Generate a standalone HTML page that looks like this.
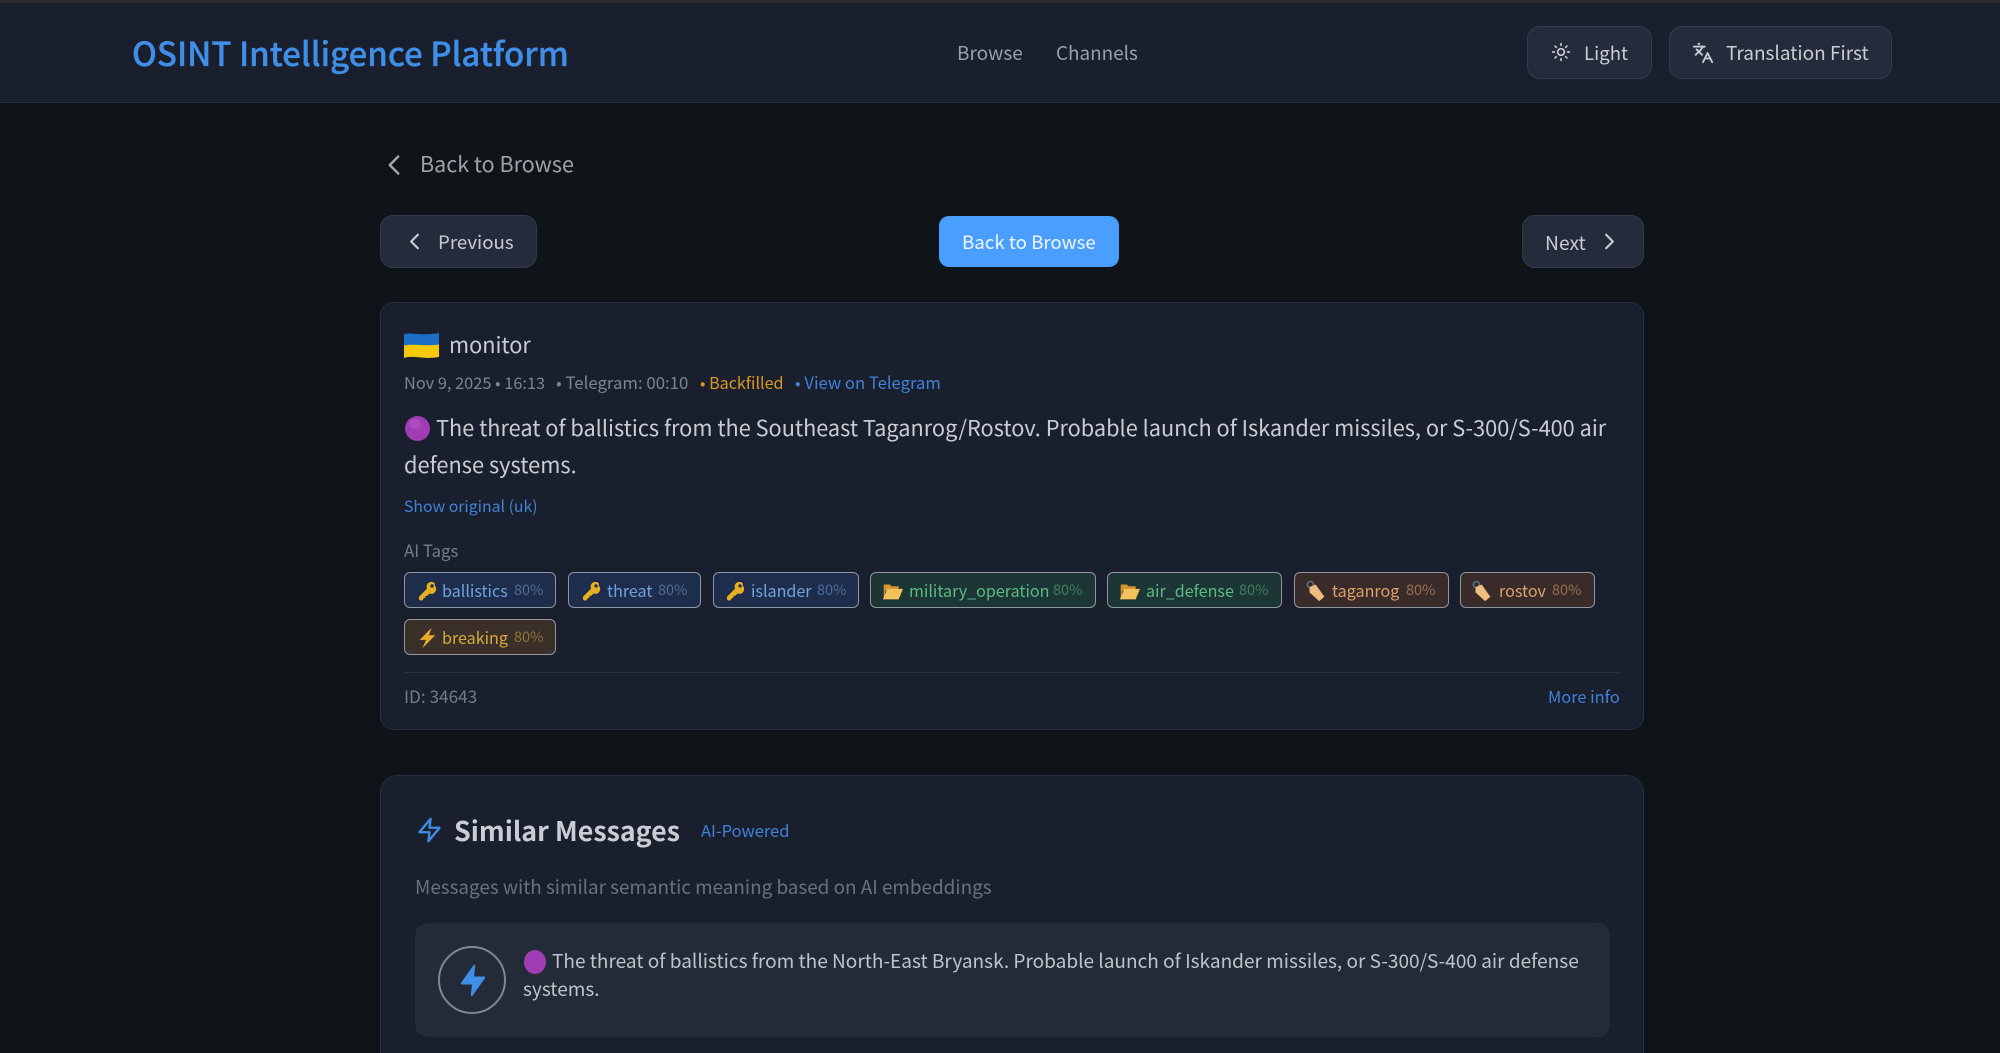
<!DOCTYPE html>
<html lang="en"><head><meta charset="utf-8"><title>OSINT Intelligence Platform</title>
<style>
html,body{margin:0;padding:0;width:2000px;height:1053px;overflow:hidden;background:#0f1419}
body{position:relative;font-family:"Noto Sans CJK JP","Liberation Sans",sans-serif;color:#c9ccd2}
.t{position:absolute;white-space:nowrap;line-height:40px;height:40px}
.b{position:absolute;box-sizing:border-box}
.btn{background:#252b3a;border:1.5px solid #333a49;border-radius:13px}
.card{background:#1a1f2e;border:1.5px solid #282f3e;border-radius:14px}
.tag{height:36px;border:1.5px solid #8f96a0;border-radius:6px;top:572px}
.r2{top:619px}
.bl{background:#1e2d4b}.gr{background:#1c3535}.br{background:#3a2b2b}.ye{background:#3a3029}
.tt{font-size:16.1px}.pc{font-size:14.5px}
.cbl{color:#6fa3e0}.pbl{color:#4c6e9c}
.cgr{color:#5dbb85}.pgr{color:#3f8062}
.cbr{color:#dca268}.pbr{color:#96704e}
.cye{color:#d8aa3c}.pye{color:#8f7438}
svg{position:absolute;overflow:visible}
.ln{fill:none;stroke-linecap:round;stroke-linejoin:round}
</style></head><body>
<svg width="0" height="0" style="position:absolute"><defs>
<symbol id="key" viewBox="0 0 24 24"><path d="M20.5 3.5c-2-2-5.4-2-7.4 0-1.6 1.6-1.900 3.900-1 5.800L3 18.500l.5 3 1.500 1 2.500-.5.500-2 2-.5.500-2 2-.5 2.200-2.300c1.900.800 4.200.5 5.800-1.100 2-2 2-5.400 0-7.400z" fill="#e8ae22"/><circle cx="17.500" cy="6.500" r="1.800" fill="#1e2d4b"/></symbol>
<symbol id="folder" viewBox="0 0 24 24"><path d="M2 4h7l2 2h8v5H4L2 21z" fill="#d9922e"/><path d="M6 9h18l-5 12H1z" fill="#f2c35c"/></symbol>
<symbol id="tagi" viewBox="0 0 24 24"><circle cx="5" cy="4" r="3.500" fill="none" stroke="#5d7f90" stroke-width="1.500"/><path d="M4 7l7-3 10 14-6 5-11-10z" fill="#efbd80"/></symbol>
<symbol id="bolt" viewBox="0 0 24 24"><path d="M17 1L4 14h7L7 23l14-14h-7z" fill="#e6ac2a"/></symbol>
</defs></svg>

<div class="b" style="left:0;top:0;width:2000px;height:3px;background:#2b2d31"></div>
<div class="b" style="left:0;top:3px;width:2000px;height:100px;background:#1a1f2e;border-bottom:1.5px solid #282f3e"></div>
<div class="t" style="left:132px;top:32px;font-size:33px;font-weight:500;color:#3f8fe8;-webkit-text-stroke:.3px #3f8fe8">OSINT Intelligence Platform</div>
<div class="t" style="left:957px;top:33px;font-size:19px;color:#9a9fa8">Browse</div>
<div class="t" style="left:1056px;top:33px;font-size:18.900px;color:#9a9fa8">Channels</div>

<div class="b btn" style="left:1527px;top:26px;width:125px;height:53px"></div>
<svg style="left:1551px;top:42px" width="20" height="20" viewBox="0 0 24 24"><g class="ln" stroke="#c9ccd2" stroke-width="2"><circle cx="12" cy="12" r="4"/><path d="M12 2v2M12 20v2M4.900 4.900l1.400 1.400M17.700 17.700l1.400 1.400M2 12h2M20 12h2M6.300 17.700l-1.400 1.400M19.100 4.900l-1.400 1.400"/></g></svg>
<div class="t" style="left:1584px;top:33px;font-size:18.600px;color:#c9ccd2">Light</div>
<div class="b btn" style="left:1669px;top:26px;width:223px;height:53px"></div>
<svg style="left:1692px;top:42px" width="22" height="22" viewBox="0 0 24 24"><g class="ln" stroke="#c9ccd2" stroke-width="2"><path d="m5 8 6 6M4 14l6-6 2-3M2 5h12M7 2h1M22 22l-5-10-5 10M14 18h6"/></g></svg>
<div class="t" style="left:1726px;top:33px;font-size:19px;color:#c9ccd2">Translation First</div>

<svg style="left:377px;top:148px" width="34" height="34" viewBox="0 0 24 24"><path class="ln" stroke="#a3a7ad" stroke-width="1.700" d="m15 18-6-6 6-6"/></svg>
<div class="t" style="left:420px;top:144px;font-size:21.500px;color:#9fa3a9">Back to Browse</div>

<div class="b btn" style="left:380px;top:215px;width:157px;height:53px"></div>
<svg style="left:401px;top:228px" width="27" height="27" viewBox="0 0 24 24"><path class="ln" stroke="#c9ccd2" stroke-width="1.900" d="m15 18-6-6 6-6"/></svg>
<div class="t" style="left:438px;top:222px;font-size:18.700px;color:#c9ccd2">Previous</div>

<div class="b" style="left:939px;top:216px;width:180px;height:51px;background:#4a9eff;border-radius:10px"></div>
<div class="t" style="left:962px;top:222px;font-size:18.700px;color:#f2f6fb">Back to Browse</div>

<div class="b btn" style="left:1522px;top:215px;width:122px;height:53px"></div>
<div class="t" style="left:1545px;top:222px;font-size:19.300px;color:#c9ccd2">Next</div>
<svg style="left:1596px;top:228px" width="27" height="27" viewBox="0 0 24 24"><path class="ln" stroke="#c9ccd2" stroke-width="1.900" d="m9 18 6-6-6-6"/></svg>

<div class="b card" style="left:380px;top:302px;width:1264px;height:428px"></div>
<svg style="left:404px;top:332px" width="35" height="27" viewBox="0 0 34 26" preserveAspectRatio="none"><path d="M0 2c8-2 14 2 34-1v12c-14 2-22-1-34 1z" fill="#1c6fc4"/><path d="M0 13c12-2 20 1 34-1v12c-14 3-24-2-34 1z" fill="#f7c90d"/></svg>
<div class="t" style="left:449px;top:325px;font-size:21.700px;color:#c9ccd2">monitor</div>

<div class="t" style="left:404px;top:362px;font-size:16.350px;color:#7e848d">Nov 9, 2025 • 16:13</div>
<div class="t" style="left:556px;top:362px;font-size:16.800px;color:#7e848d">• Telegram: 00:10</div>
<div class="t" style="left:700px;top:362px;font-size:16.100px;color:#d99a1e">• Backfilled</div>
<div class="t" style="left:795px;top:362px;font-size:16.650px;color:#3f82d6">• View on Telegram</div>

<svg style="left:405px;top:416px" width="25" height="25" viewBox="0 0 25 25"><circle cx="12.500" cy="12.500" r="12.500" fill="#a03cb4"/><ellipse cx="10" cy="8" rx="6" ry="5" fill="#b358c6" opacity=".6"/></svg>
<div class="t" style="left:436px;top:408px;font-size:21.720px;color:#c9ccd2">The threat of ballistics from the Southeast Taganrog/Rostov. Probable launch of Iskander missiles, or S-300/S-400 air</div>
<div class="t" style="left:404px;top:445px;font-size:21.800px;color:#c9ccd2">defense systems.</div>

<div class="t" style="left:404px;top:486px;font-size:15.800px;color:#3f82d6">Show original (uk)</div>
<div class="t" style="left:404px;top:530px;font-size:16.800px;color:#767c85">AI Tags</div>

<div class="b tag bl" style="left:404px;width:152px"></div>
<svg style="left:416px;top:580px" width="22" height="22"><use href="#key"/></svg>
<div class="t tt cbl" style="left:442px;top:570px">ballistics</div><div class="t pc pbl" style="left:514px;top:570px">80%</div>

<div class="b tag bl" style="left:568px;width:133px"></div>
<svg style="left:580px;top:580px" width="22" height="22"><use href="#key"/></svg>
<div class="t tt cbl" style="left:607px;top:570px">threat</div><div class="t pc pbl" style="left:658px;top:570px">80%</div>

<div class="b tag bl" style="left:713px;width:146px"></div>
<svg style="left:724px;top:580px" width="22" height="22"><use href="#key"/></svg>
<div class="t tt cbl" style="left:751px;top:570px">islander</div><div class="t pc pbl" style="left:817px;top:570px">80%</div>

<div class="b tag gr" style="left:870px;width:226px"></div>
<svg style="left:882px;top:581px" width="21" height="21"><use href="#folder"/></svg>
<div class="t tt cgr" style="left:909px;top:570px">military_operation</div><div class="t pc pgr" style="left:1053px;top:570px">80%</div>

<div class="b tag gr" style="left:1107px;width:175px"></div>
<svg style="left:1119px;top:581px" width="21" height="21"><use href="#folder"/></svg>
<div class="t tt cgr" style="left:1146px;top:570px">air_defense</div><div class="t pc pgr" style="left:1239px;top:570px">80%</div>

<div class="b tag br" style="left:1294px;width:155px"></div>
<svg style="left:1306px;top:581px" width="21" height="21"><use href="#tagi"/></svg>
<div class="t tt cbr" style="left:1332px;top:570px">taganrog</div><div class="t pc pbr" style="left:1406px;top:570px">80%</div>

<div class="b tag br" style="left:1460px;width:135px"></div>
<svg style="left:1472px;top:581px" width="21" height="21"><use href="#tagi"/></svg>
<div class="t tt cbr" style="left:1499px;top:570px">rostov</div><div class="t pc pbr" style="left:1552px;top:570px">80%</div>

<div class="b tag ye r2" style="left:404px;width:152px"></div>
<svg style="left:416px;top:627px" width="22" height="22"><use href="#bolt"/></svg>
<div class="t tt cye" style="left:442px;top:617px">breaking</div><div class="t pc pye" style="left:514px;top:617px">80%</div>

<div class="b" style="left:404px;top:672px;width:1217px;height:1px;background:#2a3140"></div>
<div class="t" style="left:404px;top:676px;font-size:17.200px;color:#767c85">ID: 34643</div>
<div class="t" style="left:1548px;top:676px;font-size:16.400px;color:#3f82d6">More info</div>

<div class="b card" style="left:380px;top:775px;width:1264px;height:320px;border-radius:18px"></div>
<svg style="left:416px;top:816px" width="27" height="28" viewBox="0 0 24 24"><path class="ln" stroke="#3f8fe8" stroke-width="2" d="M13 2 3 14h9l-1 8 10-12h-9l1-8z"/></svg>
<div class="t" style="left:454px;top:810px;font-size:26.800px;font-weight:700;color:#c9ccd2">Similar Messages</div>
<div class="t" style="left:701px;top:810px;font-size:16.500px;color:#3f82d6">AI-Powered</div>
<div class="t" style="left:415px;top:867px;font-size:18.880px;color:#6b717a">Messages with similar semantic meaning based on AI embeddings</div>

<div class="b" style="left:415px;top:923px;width:1195px;height:114px;background:#232a38;border-radius:12px"></div>
<div class="b" style="left:438px;top:946px;width:68px;height:68px;border:2px solid #82878f;border-radius:50%"></div>
<svg style="left:457.700px;top:963px" width="30" height="35" viewBox="0 0 24 24" preserveAspectRatio="none"><path fill="#3f8fe8" stroke="#3f8fe8" stroke-width="1.500" stroke-linejoin="round" d="M13 2 3 14h9l-1 8 10-12h-9l1-8z"/></svg>
<svg style="left:524px;top:950px" width="22" height="24" viewBox="0 0 25 25" preserveAspectRatio="none"><circle cx="12.500" cy="12.500" r="12.500" fill="#a03cb4"/></svg>
<div class="t" style="left:552px;top:941px;font-size:19.050px;color:#c0c3c9">The threat of ballistics from the North-East Bryansk. Probable launch of Iskander missiles, or S-300/S-400 air defense</div>
<div class="t" style="left:523px;top:969px;font-size:19.050px;color:#c0c3c9">systems.</div>
</body></html>
